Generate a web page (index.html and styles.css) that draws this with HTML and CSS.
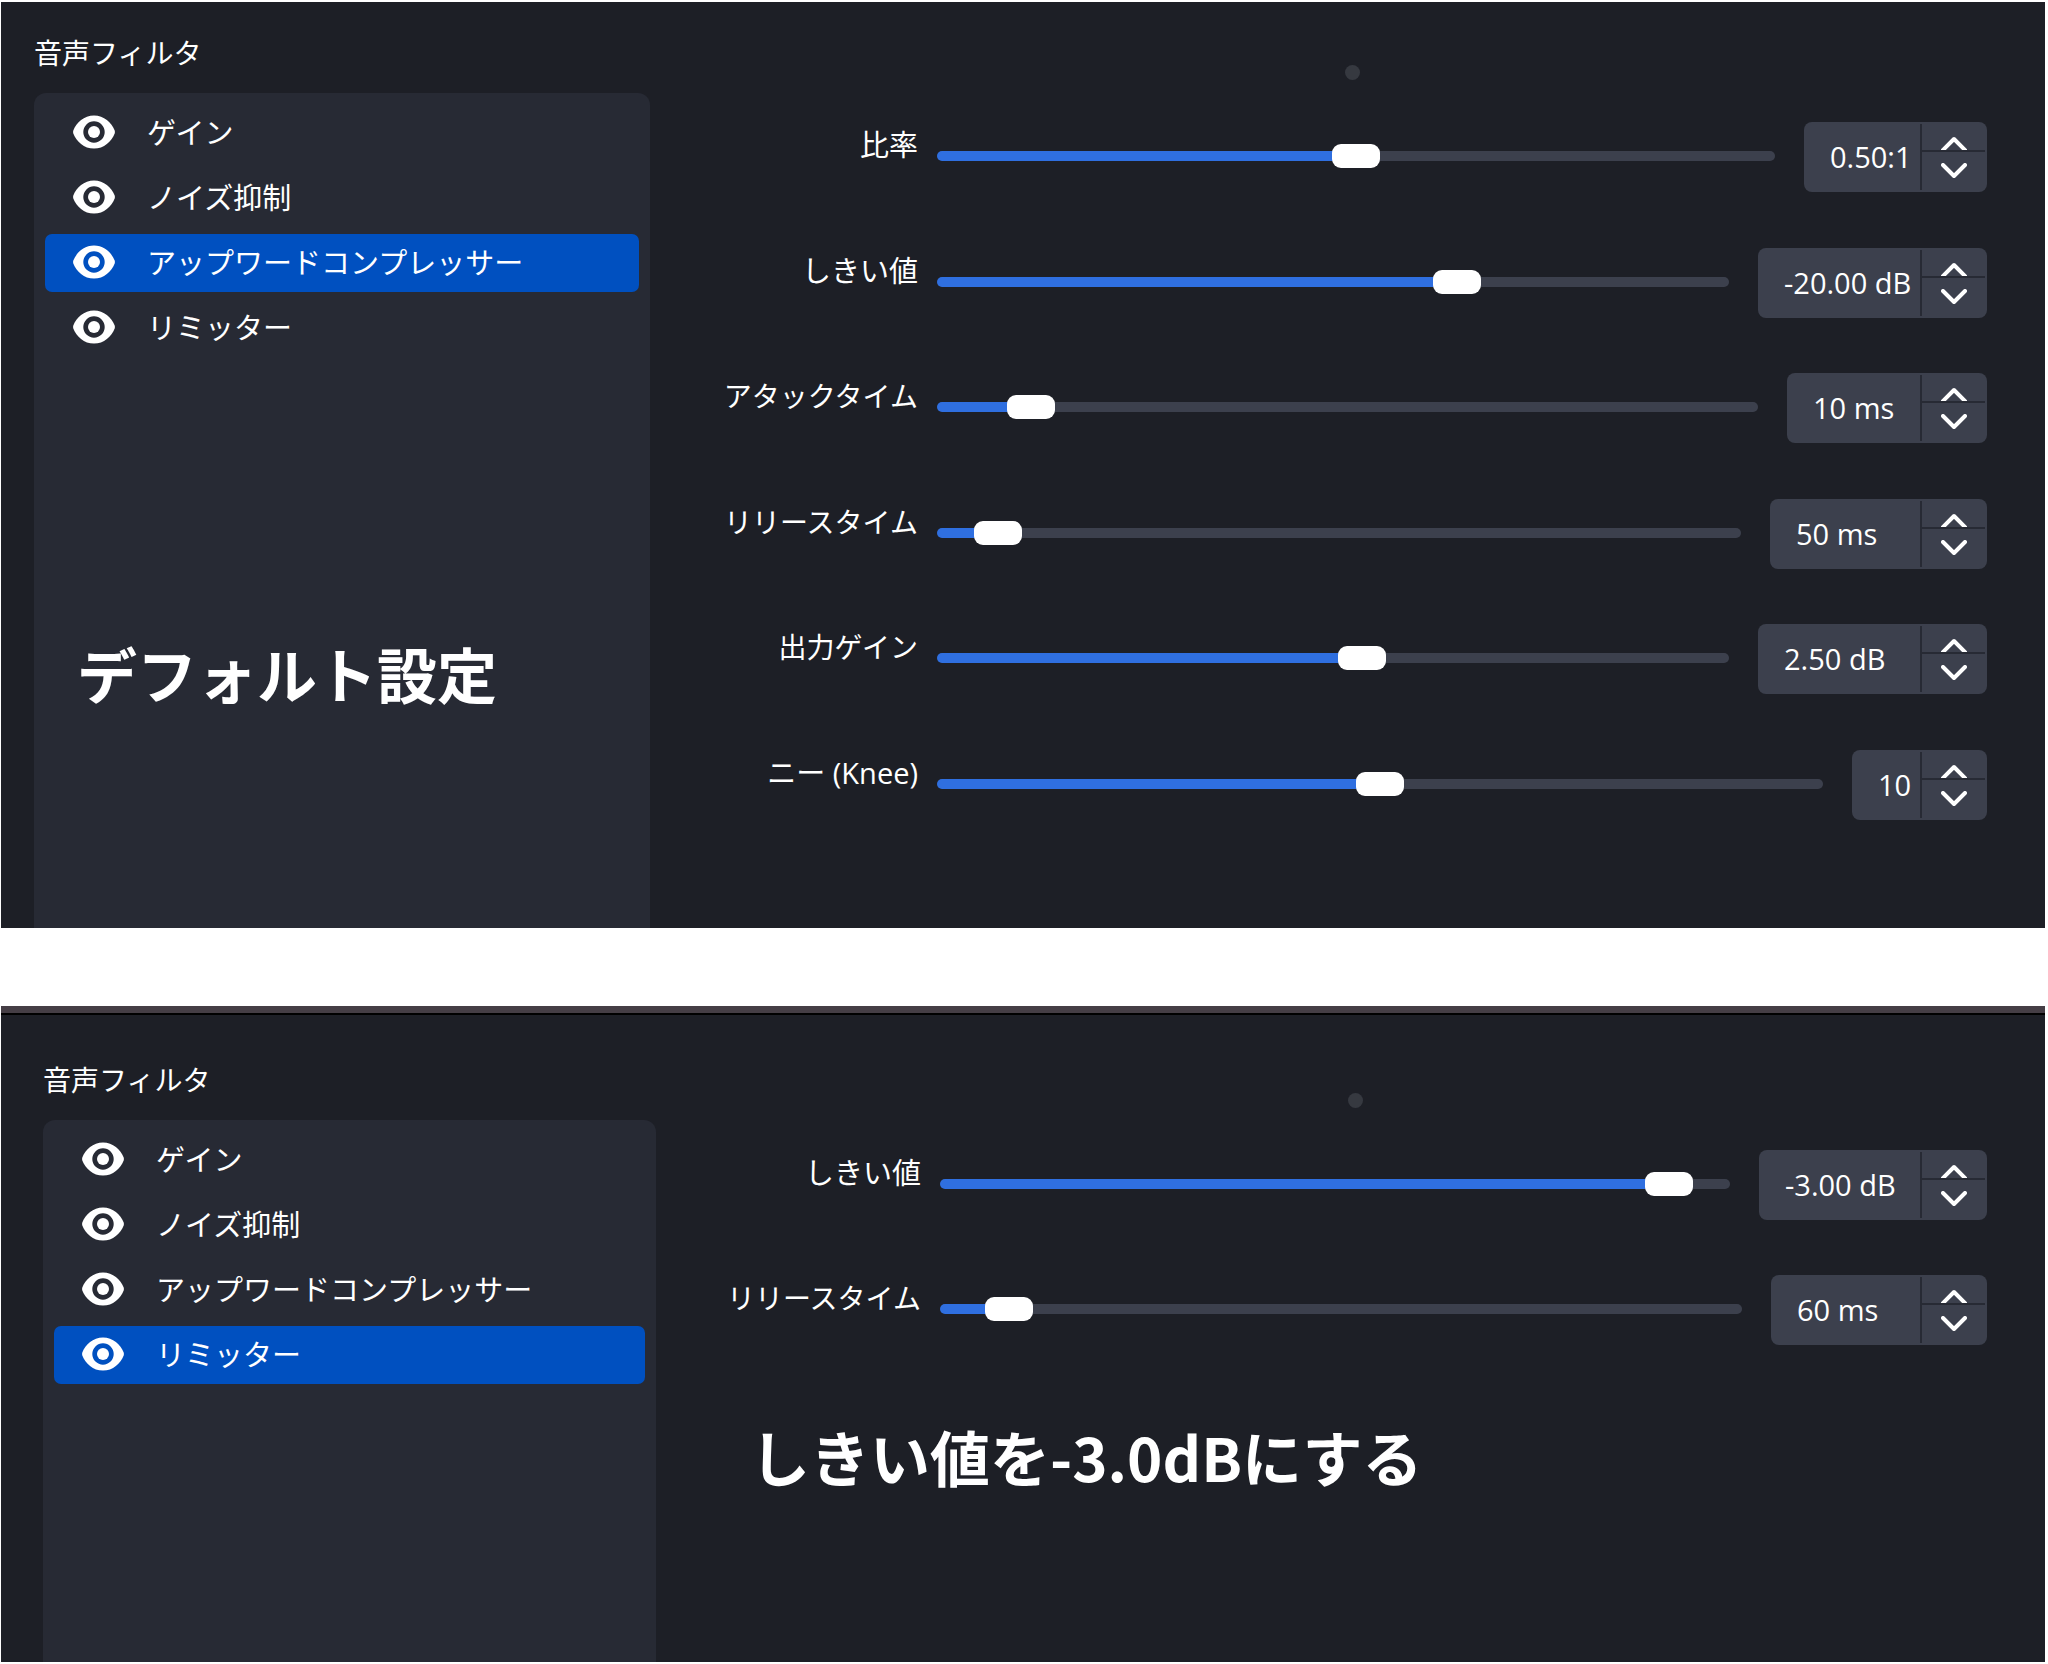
FILE: index.html
```html
<!DOCTYPE html>
<html lang="ja">
<head>
<meta charset="utf-8">
<meta name="viewport" content="width=device-width, initial-scale=1">
<title>音声フィルタ</title>
<link rel="stylesheet" href="styles.css">
</head>
<body>
<svg class="sprite" aria-hidden="true">
  <symbol id="eye" viewBox="0 0 42 34">
    <path fill="currentColor" fill-rule="evenodd" d="M21 0.5C11 0.5 3.5 7.500 0.300 15.600Q-0.100 17 0.300 18.400C3.500 26.500 11 33.500 21 33.500S38.500 26.500 41.700 18.400Q42.100 17 41.700 15.600C38.500 7.500 31 0.500 21 0.500ZM21 6.300A10.700 10.700 0 1 1 21 27.700A10.700 10.700 0 1 1 21 6.300Z"/>
    <circle cx="21" cy="17" r="6" fill="currentColor"/>
  </symbol>
  <symbol id="up" viewBox="0 0 26 14">
    <path fill="none" stroke="currentColor" stroke-width="4" stroke-linecap="round" stroke-linejoin="round" d="M1 15L13 3L25 15"/>
  </symbol>
  <symbol id="down" viewBox="0 0 26 16">
    <path fill="none" stroke="currentColor" stroke-width="4" stroke-linecap="round" stroke-linejoin="round" d="M2 2L13 13L24 2"/>
  </symbol>
</svg>

<section class="panel compressor">
  <div class="sidebar">
    <h2 class="title">音声フィルタ</h2>
    <div class="list">
      <ul class="filters">
        <li class="filter"><svg class="eye"><use href="#eye"/></svg>ゲイン</li>
        <li class="filter"><svg class="eye"><use href="#eye"/></svg>ノイズ抑制</li>
        <li class="filter selected"><svg class="eye"><use href="#eye"/></svg>アップワードコンプレッサー</li>
        <li class="filter"><svg class="eye"><use href="#eye"/></svg>リミッター</li>
      </ul>
      <p class="caption">デフォルト設定</p>
    </div>
  </div>
  <div class="settings">
    <span class="grip"></span>
    <div class="rows">
      <div class="row">
        <label class="name" for="ratio">比率</label>
        <input class="slider" id="ratio" type="range" min="0" max="1" step="0.01" value="0.5" style="--fill:50%">
        <div class="spin w-ratio"><input class="value" type="text" value="0.50:1" aria-label="比率の値"><button class="step inc" type="button" aria-label="増やす"><svg class="up"><use href="#up"/></svg></button><button class="step dec" type="button" aria-label="減らす"><svg class="down"><use href="#down"/></svg></button></div>
      </div>
      <div class="row">
        <label class="name" for="threshold">しきい値</label>
        <input class="slider" id="threshold" type="range" min="-60" max="0" value="-20" style="--fill:66%">
        <div class="spin w-db"><input class="value" type="text" value="-20.00 dB" aria-label="しきい値の値"><button class="step inc" type="button" aria-label="増やす"><svg class="up"><use href="#up"/></svg></button><button class="step dec" type="button" aria-label="減らす"><svg class="down"><use href="#down"/></svg></button></div>
      </div>
      <div class="row">
        <label class="name kana" for="attack">アタックタイム</label>
        <input class="slider" id="attack" type="range" min="1" max="100" value="10" style="--fill:9%">
        <div class="spin w-attack"><input class="value" type="text" value="10 ms" aria-label="アタックタイムの値"><button class="step inc" type="button" aria-label="増やす"><svg class="up"><use href="#up"/></svg></button><button class="step dec" type="button" aria-label="減らす"><svg class="down"><use href="#down"/></svg></button></div>
      </div>
      <div class="row">
        <label class="name kana" for="release">リリースタイム</label>
        <input class="slider" id="release" type="range" min="1" max="1000" value="50" style="--fill:5%">
        <div class="spin w-release"><input class="value" type="text" value="50 ms" aria-label="リリースタイムの値"><button class="step inc" type="button" aria-label="増やす"><svg class="up"><use href="#up"/></svg></button><button class="step dec" type="button" aria-label="減らす"><svg class="down"><use href="#down"/></svg></button></div>
      </div>
      <div class="row">
        <label class="name kana" for="gain">出力ゲイン</label>
        <input class="slider" id="gain" type="range" min="-32" max="32" step="0.1" value="2.5" style="--fill:54%">
        <div class="spin w-db"><input class="value" type="text" value="2.50 dB" aria-label="出力ゲインの値"><button class="step inc" type="button" aria-label="増やす"><svg class="up"><use href="#up"/></svg></button><button class="step dec" type="button" aria-label="減らす"><svg class="down"><use href="#down"/></svg></button></div>
      </div>
      <div class="row">
        <label class="name" for="knee">ニー (Knee)</label>
        <input class="slider" id="knee" type="range" min="0" max="20" value="10" style="--fill:50%">
        <div class="spin w-knee"><input class="value" type="text" value="10" aria-label="ニーの値"><button class="step inc" type="button" aria-label="増やす"><svg class="up"><use href="#up"/></svg></button><button class="step dec" type="button" aria-label="減らす"><svg class="down"><use href="#down"/></svg></button></div>
      </div>
    </div>
  </div>
</section>

<section class="panel limiter">
  <div class="sidebar">
    <h2 class="title">音声フィルタ</h2>
    <div class="list">
      <ul class="filters">
        <li class="filter"><svg class="eye"><use href="#eye"/></svg>ゲイン</li>
        <li class="filter"><svg class="eye"><use href="#eye"/></svg>ノイズ抑制</li>
        <li class="filter"><svg class="eye"><use href="#eye"/></svg>アップワードコンプレッサー</li>
        <li class="filter selected"><svg class="eye"><use href="#eye"/></svg>リミッター</li>
      </ul>
    </div>
  </div>
  <div class="settings">
    <span class="grip"></span>
    <div class="rows">
      <div class="row">
        <label class="name" for="limit">しきい値</label>
        <input class="slider" id="limit" type="range" min="-60" max="0" value="-3" style="--fill:95%">
        <div class="spin w-db"><input class="value" type="text" value="-3.00 dB" aria-label="しきい値の値"><button class="step inc" type="button" aria-label="増やす"><svg class="up"><use href="#up"/></svg></button><button class="step dec" type="button" aria-label="減らす"><svg class="down"><use href="#down"/></svg></button></div>
      </div>
      <div class="row">
        <label class="name kana" for="limit-release">リリースタイム</label>
        <input class="slider" id="limit-release" type="range" min="1" max="1000" value="60" style="--fill:6%">
        <div class="spin w-release"><input class="value" type="text" value="60 ms" aria-label="リリースタイムの値"><button class="step inc" type="button" aria-label="増やす"><svg class="up"><use href="#up"/></svg></button><button class="step dec" type="button" aria-label="減らす"><svg class="down"><use href="#down"/></svg></button></div>
      </div>
    </div>
    <p class="caption">しきい値を-3.0dBにする</p>
  </div>
</section>
</body>
</html>
```
FILE: styles.css
```css
* {
  box-sizing: border-box;
}

body {
  display: grid;
  grid-template-rows: 24fr 17fr;
  gap: 78px;
  min-height: 100vh;
  margin: 0;
  padding: 2px 3px 2px 1px;
  background: #fff;
  color: #fff;
  font: 29px/40px "Open Sans", "Noto Sans CJK JP", sans-serif;
}

.sprite {
  position: absolute;
  width: 0;
  height: 0;
}

.panel {
  display: flex;
  gap: 67px;
  padding: 31px 58px 0 33px;
  background: #1d1f26;
}

.limiter {
  padding-top: 47px;
  padding-left: 42px;
  border-top: 7px solid #453e45;
  box-shadow: inset 0 2px #000;
}

.sidebar {
  display: flex;
  flex: 0 0 616px;
  flex-direction: column;
}

.limiter .sidebar {
  flex-basis: 613px;
}

.title {
  margin: 0 0 20px;
  font-size: 28px;
  font-weight: 400;
  line-height: 40px;
}

.list {
  flex: 1;
  padding: 11px 11px 0;
  border-radius: 12px 12px 0 0;
  background: #272a34;
}

.filters {
  display: grid;
  gap: 7px;
  margin: 0;
  padding: 0;
  list-style: none;
}

.filter {
  display: flex;
  align-items: center;
  gap: 32px;
  height: 58px;
  padding-left: 28px;
  border-radius: 7px;
}

.selected {
  background: #0050c0;
}

.eye {
  width: 42px;
  height: 34px;
  margin-bottom: 2px;
}

.caption {
  margin: 0;
  font-size: 60px;
  font-weight: 700;
  font-family: "Noto Sans CJK JP", sans-serif;
  line-height: 80px;
}

.list .caption {
  margin-top: 276px;
  padding-left: 32px;
}

.settings {
  display: flex;
  flex: 1;
  flex-direction: column;
  padding-top: 32px;
}

.limiter .settings {
  padding-top: 33px;
}

.grip {
  align-self: center;
  width: 15px;
  height: 15px;
  border-radius: 50%;
  background: #363940;
}

.rows {
  display: grid;
  gap: 55px;
  margin-top: 42px;
}

.compressor .rows {
  align-content: space-between;
  min-height: 698px;
}

.row {
  display: flex;
  align-items: center;
  height: 70px;
}

.name {
  flex: 0 0 201px;
  margin-right: 19px;
  padding-bottom: 24px;
  text-align: right;
  white-space: nowrap;
}

.kana {
  font-size: 28px;
}

.limiter .name {
  flex-basis: 198px;
}

.slider {
  flex: 1;
  min-width: 0;
  height: 24px;
  margin: 0 29px 2px 0;
  background: none;
  appearance: none;
}

.slider::-webkit-slider-runnable-track {
  height: 10px;
  border-radius: 5px;
  background: linear-gradient(to right, #2f6fe0 var(--fill), #3c404d var(--fill));
}

.slider::-webkit-slider-thumb {
  width: 48px;
  height: 24px;
  margin-top: -7px;
  border-radius: 9px;
  background: #fff;
  appearance: none;
}

.spin {
  display: grid;
  grid-template: 26px 1fr / 1fr 63px;
  height: 70px;
  padding: 2px;
  border-radius: 8px;
  background: #3c404d;
}

.w-ratio { width: 183px; }
.w-db { width: 229px; }
.w-attack { width: 200px; }
.w-release { width: 217px; }
.w-knee { width: 135px; }

.limiter .w-db { width: 228px; }
.limiter .w-release { width: 216px; }

.value {
  grid-row: 1 / 3;
  min-width: 0;
  width: 100%;
  padding: 0 0 0 24px;
  border: 0;
  border-right: 2px solid #272a34;
  background: none;
  color: inherit;
  font: inherit;
}

.step {
  display: flex;
  justify-content: center;
  padding: 0;
  border: 0;
  background: none;
  color: inherit;
}

.inc {
  align-items: flex-end;
}

.dec {
  padding-top: 11px;
  border-top: 2px solid #272a34;
}

.up {
  width: 26px;
  height: 14px;
}

.down {
  width: 26px;
  height: 16px;
}

.limiter .caption {
  margin-top: 71px;
  padding-left: 27px;
}
```
